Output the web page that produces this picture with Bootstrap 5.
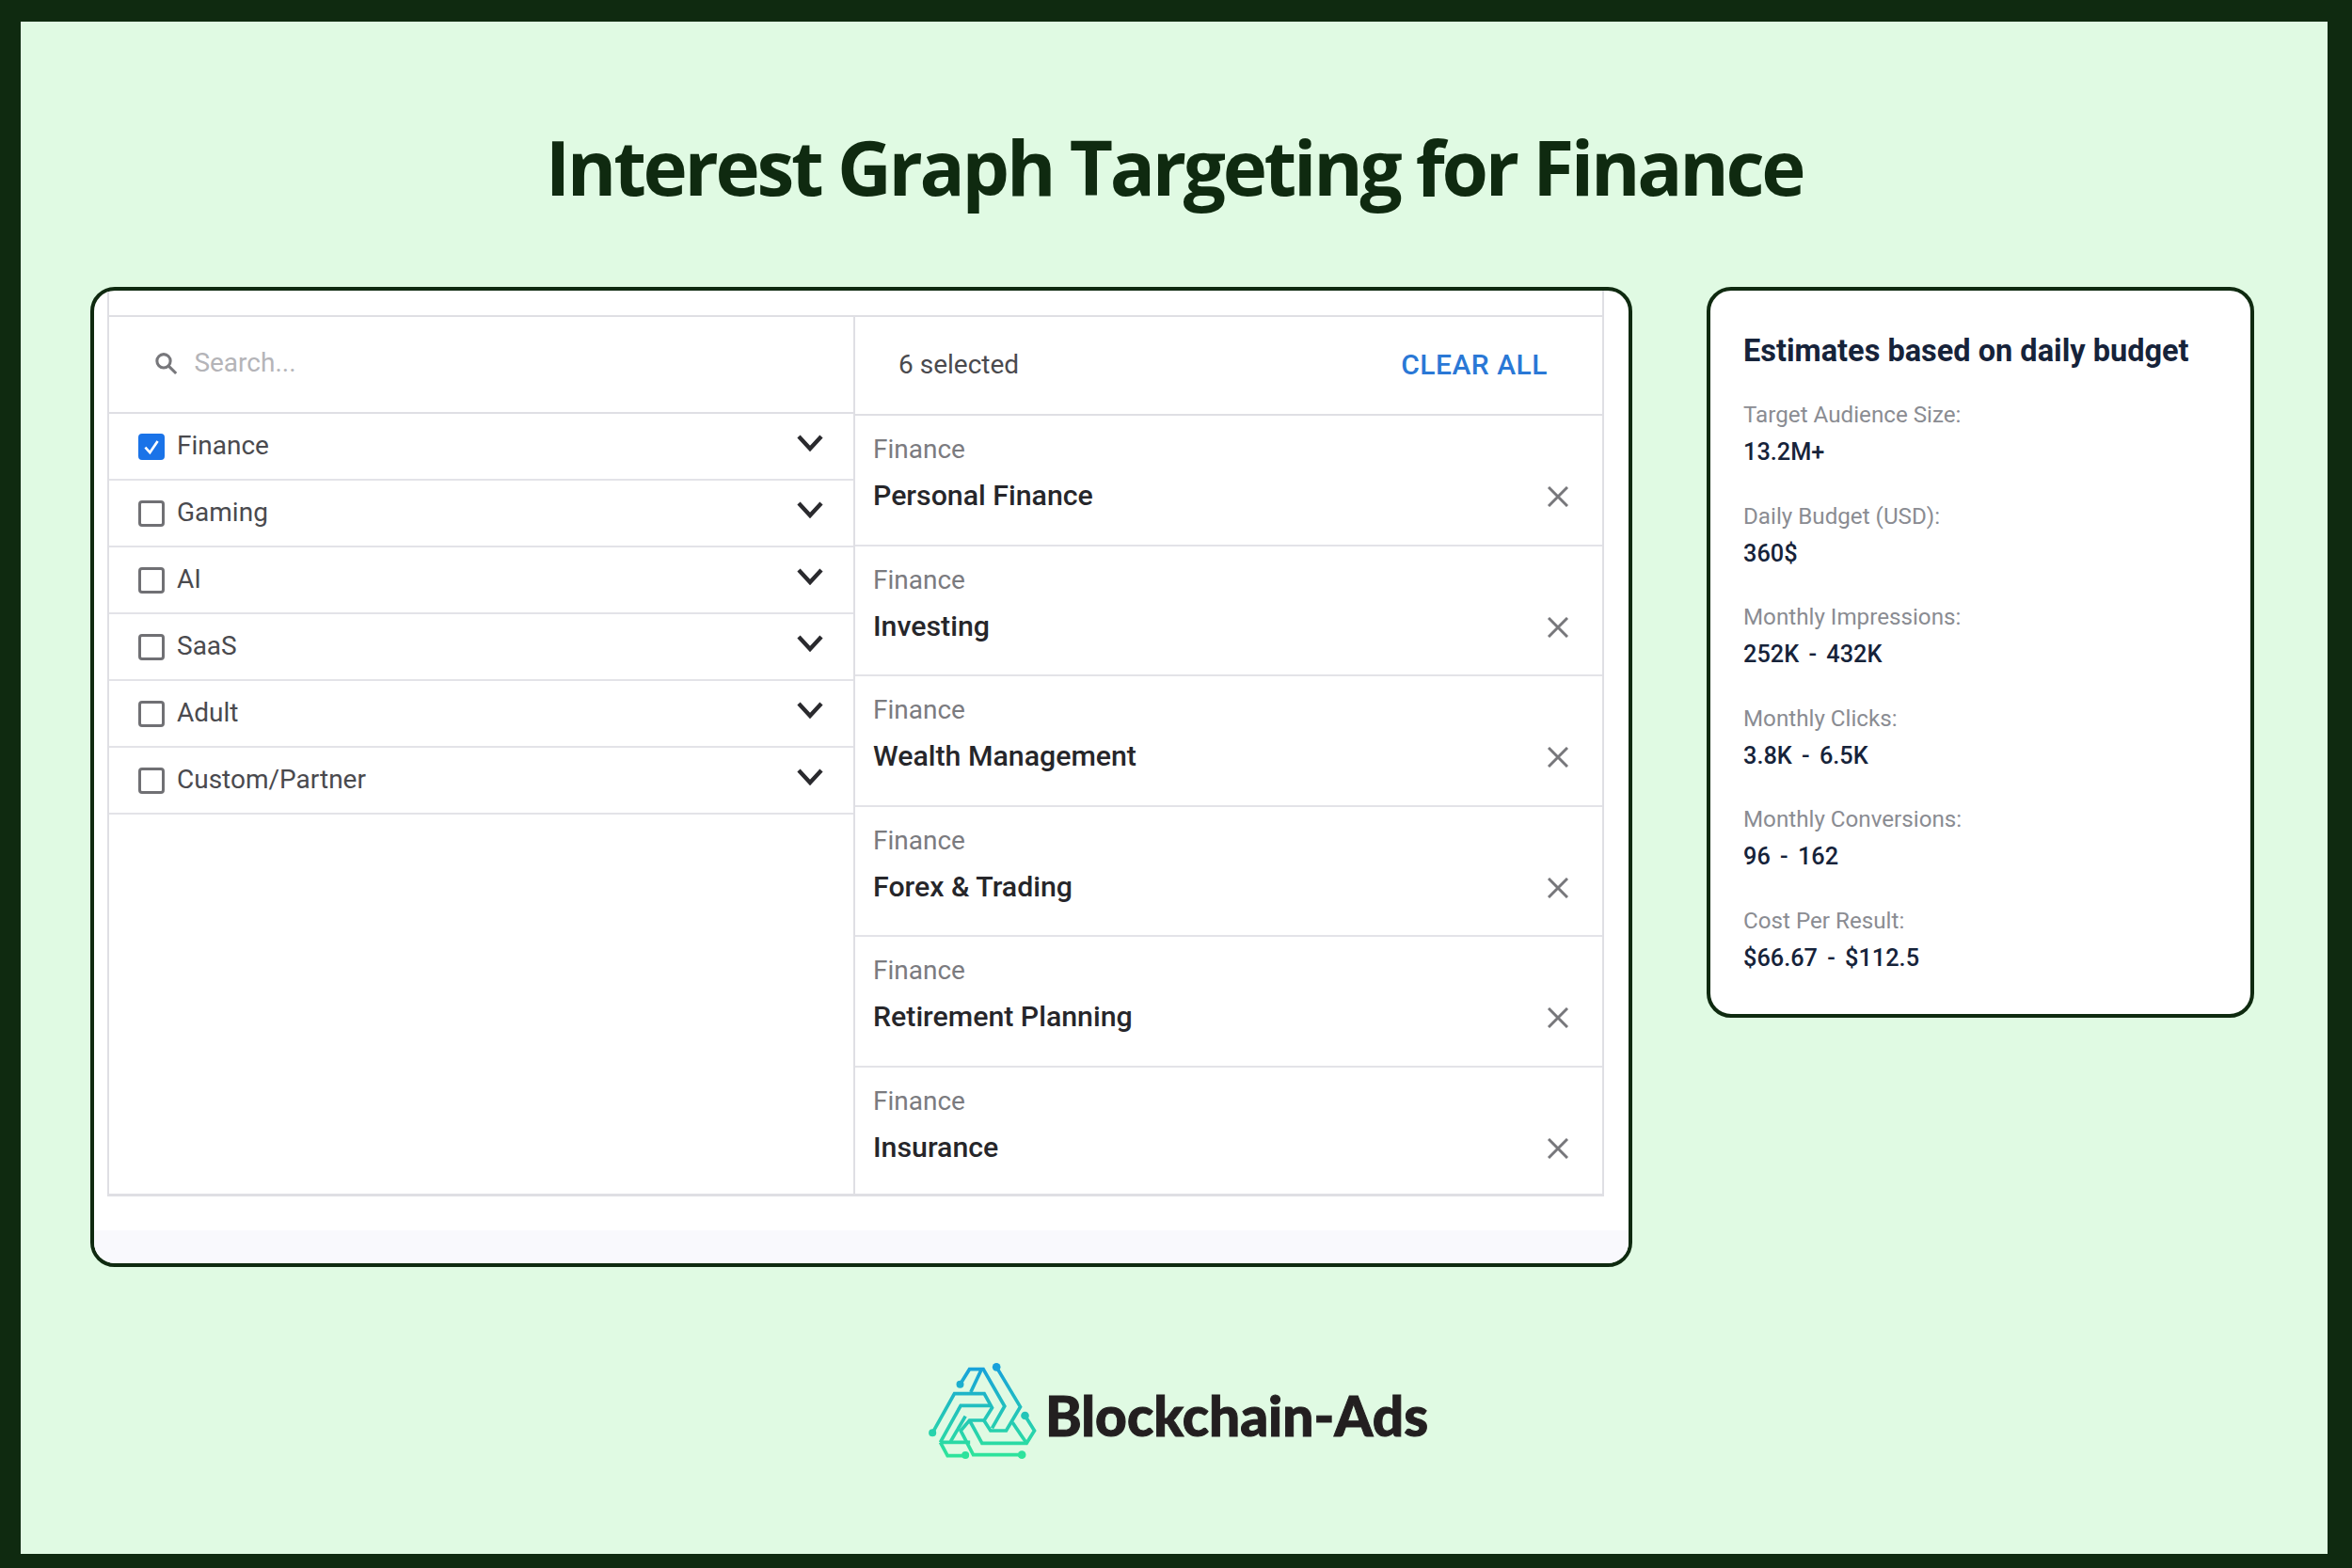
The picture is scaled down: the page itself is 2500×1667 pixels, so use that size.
<!DOCTYPE html>
<html lang="en">
<head>
  <meta charset="UTF-8" />
  <title>Interest Graph Targeting for Finance</title>
  <meta name="viewport" content="width=device-width, initial-scale=1" />
  <link href="https://cdn.jsdelivr.net/npm/bootstrap@5.3.0/dist/css/bootstrap.min.css" rel="stylesheet" />
  <style>
    body { background:#0f2a10; font-family:Roboto, sans-serif; }
    .frame { height:1667px; border-style:solid; border-color:#0f2a10; border-width:23px 26px 15px 22px; background:#e0fae3; overflow:hidden; }
    .title-band { height:282px; padding-top:26px; }
    .title-band h1 { font-family:"Open Sans", sans-serif; font-weight:700; font-size:80px; line-height:1; color:#0f2a10; margin:0; letter-spacing:-3.3px; }
    .cards { padding-left:74px; gap:79px; }
    .panel-card { background:#fff; border:4px solid #0f2a10; border-radius:26px; overflow:hidden; }
    .picker-card { width:1639px; height:1042px; }
    .picker { margin:0 26px 0 14px; height:963px; padding-top:26px; border:solid #dfdfe4; border-width:0 2px 3px 2px; }
    .picker-body { border-top:2px solid #dfdfe4; height:100%; }
    .cat-col { width:791px; }
    .sel-col { flex:1; border-left:2px solid #dfdfe4; }
    .search-row { height:103px; padding:0 0 4px 47px; gap:17px; border-bottom:2px solid #dfdfe4; }
    .search-row input { border:0; padding:0; font-size:28px; color:#333; box-shadow:none; }
    .search-row input::placeholder { color:#b4b4b8; }
    .cat-row { height:71px; padding:0 32px 0 31px; border-bottom:2px solid #e3e3e8; font-size:28px; color:#4a4a4e; }
    .cat-row span { padding-bottom:1px; }
    .cat-row > svg { margin-bottom:7px; }
    .cat-row .form-check-input { width:28px; height:28px; margin:0 13px 0 0; border:3px solid #707074; border-radius:4px; flex:none; }
    .cat-row .form-check-input:checked { background-color:#1a73e8; border-color:#1a73e8; background-size:100%; background-image:url("data:image/svg+xml,%3csvg xmlns='http://www.w3.org/2000/svg' viewBox='0 0 20 20'%3e%3cpath fill='none' stroke='%23fff' stroke-width='2.4' d='M4 10.5l4.5 5L16 4.5'/%3e%3c/svg%3e"); }
    .sel-head { height:105px; padding:0 58px 3px 46px; border-bottom:2px solid #dfdfe4; font-size:28px; color:#4a4a4e; }
    .sel-head span { padding-top:2px; }
    .clear-btn { font-size:30px; font-weight:500; color:#2a78d6; letter-spacing:.5px; padding:0; border:0; }
    .sel-row { height:138.5px; padding:19px 36px 0 19px; border-bottom:2px solid #e3e3e8; }
    .sel-row:last-child { border-bottom:0; }
    .sel-label { font-size:28px; line-height:34px; color:#7b7b7f; }
    .sel-name { font-size:30.3px; line-height:38px; font-weight:500; color:#26262a; margin-top:13px; }
    .sel-row svg { margin-top:56px; flex:none; }
    .picker-gap { height:38px; }
    .picker-tint { height:37px; background:#f9f9fd; }
    .est-card { width:582px; height:777px; padding:45px 35px; }
    .est-card h2 { font-size:32.5px; line-height:38px; font-weight:700; color:#16233a; margin:0 0 34px; }
    .est-item { height:107.5px; }
    .est-label { font-size:24.2px; line-height:30px; color:#8a8c92; }
    .est-value { font-size:25.3px; line-height:30px; font-weight:500; color:#16233a; margin-top:10px; word-spacing:4px; }
    .brand { margin-top:88px; padding-left:8px; gap:8px; }
    .brand-name { font-family:Lato, sans-serif; font-weight:900; font-size:58.5px; line-height:1; color:#231f20; padding-top:8px; -webkit-text-stroke:1px #231f20; }
  </style>
</head>
<body>
  <div class="frame">
    <div class="title-band d-flex align-items-center justify-content-center">
      <h1>Interest Graph Targeting for Finance</h1>
    </div>

    <div class="cards d-flex align-items-start">
      <div class="panel-card picker-card d-flex flex-column">
        <div class="picker">
          <div class="picker-body d-flex">
            <div class="cat-col">
              <div class="search-row d-flex align-items-center">
                <svg width="28" height="28" viewBox="0 0 24 24" fill="none" stroke="#77777b" stroke-width="2.8"><circle cx="10" cy="10" r="6.5"/><path d="M15 15l7 7"/></svg>
                <input class="form-control" type="text" placeholder="Search..." />
              </div>
              <div id="cats"></div>
            </div>
            <div class="sel-col">
              <div class="sel-head d-flex align-items-center justify-content-between">
                <span>6 selected</span>
                <button class="btn clear-btn" type="button">CLEAR ALL</button>
              </div>
              <div id="sels"></div>
            </div>
          </div>
        </div>
        <div class="picker-gap"></div>
        <div class="picker-tint"></div>
      </div>

      <div class="panel-card est-card">
        <h2>Estimates based on daily budget</h2>
        <div id="ests"></div>
      </div>
    </div>

    <div class="brand d-flex align-items-center justify-content-center">
      <svg width="117" height="130" viewBox="45 0 350 390" fill="none" stroke="url(#brandGrad)" stroke-width="11" stroke-linejoin="miter">
        <defs>
          <linearGradient id="brandGrad" gradientUnits="userSpaceOnUse" x1="0" y1="50" x2="0" y2="345">
            <stop offset="0" stop-color="#17a0dc"/>
            <stop offset="1" stop-color="#2ee59a"/>
          </linearGradient>
        </defs>
        <path d="M148 110L178 62H222L290 180L250 250"/>
        <path d="M215 65L182 135"/>
        <path d="M264 55L340 182L295 258H245L222 222"/>
        <path d="M60 265L130 140H225L250 185L225 225H178L150 258L190 335H345"/>
        <path d="M85 295L150 178H245"/>
        <path d="M85 295H180"/>
        <path d="M85 295L108 338H165"/>
        <path d="M118 292L165 212"/>
        <path d="M178 225L218 298H360L385 258L355 210"/>
        <path d="M315 232L360 298"/>
        <g fill="url(#brandGrad)" stroke="none">
          <circle cx="148" cy="110" r="12"/>
          <circle cx="264" cy="55" r="13"/>
          <circle cx="60" cy="265" r="12"/>
          <circle cx="355" cy="210" r="13"/>
          <circle cx="165" cy="336" r="12"/>
          <circle cx="345" cy="335" r="13"/>
        </g>
      </svg>
      <span class="brand-name">Blockchain-Ads</span>
    </div>
  </div>

  <script src="https://cdn.jsdelivr.net/npm/bootstrap@5.3.0/dist/js/bootstrap.bundle.min.js"></script>
  <script>
    const chevron = `<svg width="28" height="18" viewBox="0 0 28 18" fill="none" stroke="#2a2a2e" stroke-width="4.4"><path d="M2 2l12 13L26 2"/></svg>`;
    const cross = `<svg width="22" height="22" viewBox="0 0 22 22" fill="none" stroke="#77777b" stroke-width="3"><path d="M1 1l20 20M21 1L1 21"/></svg>`;

    document.getElementById("cats").innerHTML = ["Finance", "Gaming", "AI", "SaaS", "Adult", "Custom/Partner"].map((c, i) => `
      <div class="cat-row d-flex align-items-center">
        <input class="form-check-input" type="checkbox" ${i === 0 ? "checked" : ""} />
        <span class="flex-grow-1">${c}</span>
        ${chevron}
      </div>`).join("");

    document.getElementById("sels").innerHTML = ["Personal Finance", "Investing", "Wealth Management", "Forex & Trading", "Retirement Planning", "Insurance"].map(s => `
      <div class="sel-row d-flex justify-content-between align-items-start">
        <div>
          <div class="sel-label">Finance</div>
          <div class="sel-name">${s.replace("&", "&amp;")}</div>
        </div>
        ${cross}
      </div>`).join("");

    const ests = [
      ["Target Audience Size:", "13.2M+"],
      ["Daily Budget (USD):", "360$"],
      ["Monthly Impressions:", "252K - 432K"],
      ["Monthly Clicks:", "3.8K - 6.5K"],
      ["Monthly Conversions:", "96 - 162"],
      ["Cost Per Result:", "$66.67 - $112.5"]
    ];
    document.getElementById("ests").innerHTML = ests.map(([k, v]) => `
      <div class="est-item">
        <div class="est-label">${k}</div>
        <div class="est-value">${v}</div>
      </div>`).join("");
  </script>
</body>
</html>
